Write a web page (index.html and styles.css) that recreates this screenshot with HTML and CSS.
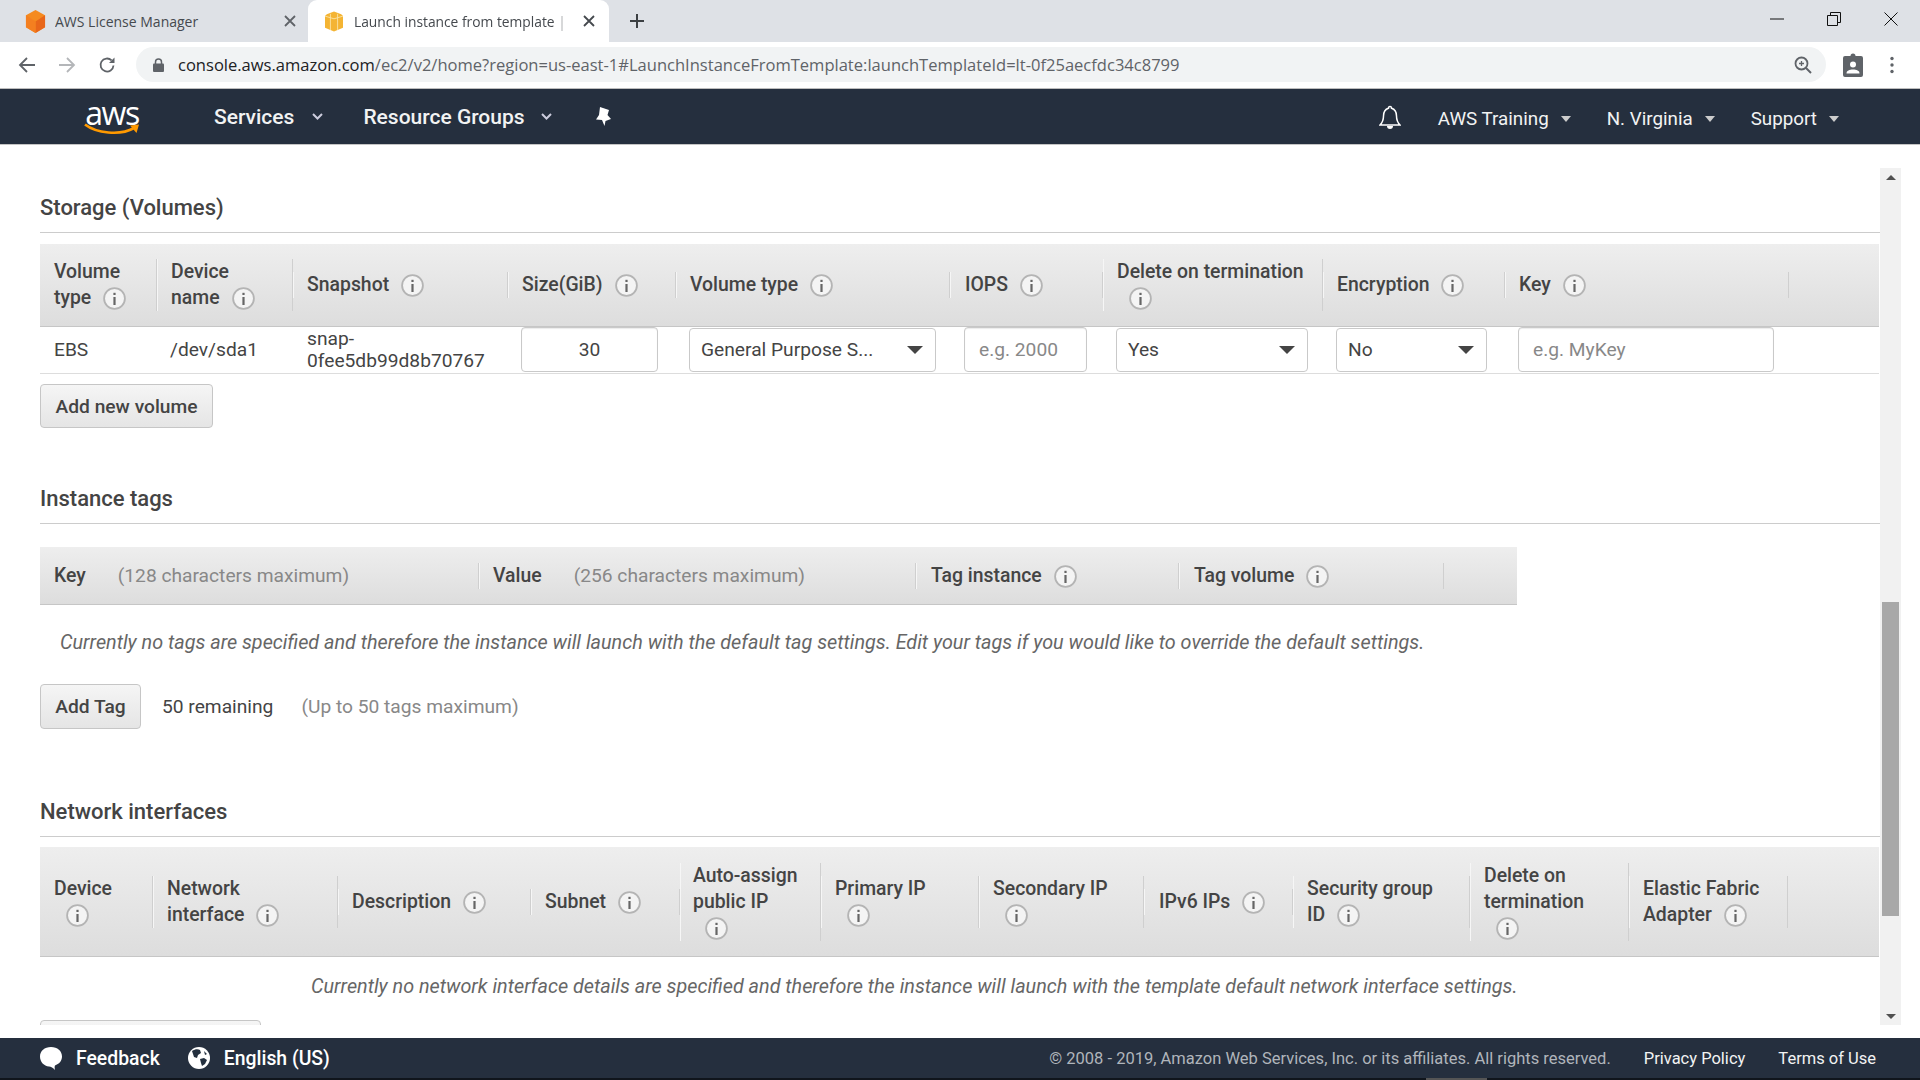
FILE: index.html
```html
<!DOCTYPE html>
<html lang="en">
<head>
<meta charset="utf-8">
<title>Launch instance from template</title>
<link rel="stylesheet" href="styles.css">
</head>
<body>
<svg class="defs" width="0" height="0" aria-hidden="true">
  <symbol id="info" viewBox="0 0 23 23">
    <circle cx="11.5" cy="11.5" r="10.4" fill="#f4f4f4" stroke="#b4b4b4" stroke-width="1.8"/>
    <rect x="10.4" y="10" width="2.2" height="8" fill="#666"/>
    <rect x="10.4" y="5.800" width="2.2" height="2.200" fill="#666"/>
  </symbol>
</svg>

<div class="tabstrip">
  <div class="tab">
    <svg class="favicon" viewBox="0 0 22 24"><path d="M11 0 21 5.500V18L11 24 1 18V5.500Z" fill="#f58a1f"/><path d="M11 12 21 5.500V18L11 24Z" fill="#e8661a"/><path d="M11 12 1 5.500V18L11 24Z" fill="#f47f20"/></svg>
    <span class="tab-title">AWS License Manager</span>
    <svg class="tab-close" viewBox="0 0 12 12"><path d="M1 1 11 11M11 1 1 11" stroke="#5f6368" stroke-width="1.800"/></svg>
  </div>
  <div class="tab tab-active">
    <svg class="favicon favicon-box" viewBox="0 0 20 22"><path d="M2 3 10 0 18 3 20 5V18L10 22 0 18V5Z" fill="#f4b433"/><path d="M6 2.500V20.500M14 2.500V20.500M0 5 10 8 20 5" stroke="#fbe3a5" stroke-width="1" fill="none"/></svg>
    <span class="tab-title tab-fade">Launch instance from template | E</span>
    <svg class="tab-close tab-close-active" viewBox="0 0 12 12"><path d="M1 1 11 11M11 1 1 11" stroke="#45494e" stroke-width="1.800"/></svg>
  </div>
  <svg class="newtab" viewBox="0 0 16 16"><path d="M8 1V15M1 8H15" stroke="#3c4043" stroke-width="2"/></svg>
  <div class="winctl">
    <svg viewBox="0 0 14 14"><path d="M0 7H14" stroke="#111" stroke-width="1"/></svg>
    <svg viewBox="0 0 14 14"><path d="M.5 3.500H10.500V13.500H.5ZM3.500 3.500V.5H13.500V10.500H10.500" stroke="#111" fill="none"/></svg>
    <svg viewBox="0 0 14 14"><path d="M.5.5 13.500 13.500M13.500.5.5 13.500" stroke="#111" fill="none"/></svg>
  </div>
</div>

<div class="toolbar">
  <svg class="tb-icon" viewBox="0 0 18 18"><path d="M17 9H2M9 2 2 9l7 7" fill="none" stroke="#5f6368" stroke-width="1.800"/></svg>
  <svg class="tb-icon" viewBox="0 0 18 18"><path d="M1 9H16M9 2l7 7-7 7" fill="none" stroke="#b4b6b9" stroke-width="1.800"/></svg>
  <svg class="tb-icon" viewBox="0 0 18 18"><path d="M15.500 9.500A6.500 6.500 0 1 1 13.600 4.400" fill="none" stroke="#5f6368" stroke-width="1.800"/><path d="M16.500 1.500V7H11Z" fill="#5f6368"/></svg>
  <div class="omnibox">
    <svg class="lock" viewBox="0 0 11 14"><path d="M2.500 6V4a3 3 0 0 1 6 0v2" fill="none" stroke="#5f6368" stroke-width="1.500"/><rect y="5.500" width="11" height="8.500" rx="1" fill="#5f6368"/></svg>
    <span class="url"><span class="url-host">console.aws.amazon.com</span>/ec2/v2/home?region=us-east-1#LaunchInstanceFromTemplate:launchTemplateId=lt-0f25aecfdc34c8799</span>
    <svg class="zoom-ico" viewBox="0 0 18 18"><circle cx="7.500" cy="7.500" r="6" fill="none" stroke="#5f6368" stroke-width="1.800"/><path d="M12 12 17 17" stroke="#5f6368" stroke-width="2"/><path d="M7.500 5V10M5 7.500H10" stroke="#5f6368" stroke-width="1.300"/></svg>
  </div>
  <svg class="badge" viewBox="0 0 20 24"><path d="M7.500 3a2.500 2.500 0 0 1 5 0h5.500a2 2 0 0 1 2 2v17a2 2 0 0 1-2 2H2a2 2 0 0 1-2-2V5a2 2 0 0 1 2-2Z" fill="#5f6368"/><circle cx="10" cy="11.500" r="3" fill="#fff"/><path d="M3.500 20.500c0-3 3-4 6.500-4s6.500 1 6.500 4Z" fill="#fff"/></svg>
  <svg class="kebab" viewBox="0 0 4 18"><circle cx="2" cy="2.500" r="1.700" fill="#5f6368"/><circle cx="2" cy="9" r="1.700" fill="#5f6368"/><circle cx="2" cy="15.500" r="1.700" fill="#5f6368"/></svg>
</div>

<nav class="navbar">
  <div class="logo">
    <span class="logo-text">aws</span>
    <svg class="logo-smile" viewBox="0 0 56 12"><path d="M1 1.500C12 10 36 13 50 5" fill="none" stroke="#f90" stroke-width="2.600"/><path d="M46 2.500 55 1.500 52.500 10Z" fill="#f90"/></svg>
  </div>
  <a class="nav-item nav-services">Services</a>
  <svg class="chev" viewBox="0 0 11 7"><path d="M1 1 5.500 5.500 10 1" fill="none" stroke="#ccd" stroke-width="2"/></svg>
  <a class="nav-item nav-groups">Resource Groups</a>
  <svg class="chev chev-groups" viewBox="0 0 11 7"><path d="M1 1 5.500 5.500 10 1" fill="none" stroke="#ccd" stroke-width="2"/></svg>
  <svg class="pin" viewBox="0 0 18 20"><path d="M5 0 14 3 12.500 8 16 12 10.500 14 9.500 19 7 13 1 12.500 4 8Z" fill="#fff"/></svg>
  <div class="nav-right">
    <svg class="bell" viewBox="0 0 22 25"><path d="M11 1.500a1.500 1.500 0 0 1 1.500 1.800C16 4.300 17.500 7 17.500 11c0 4.500 1.500 7 3.500 9H1c2-2 3.500-4.500 3.500-9 0-4 1.500-6.700 5-7.700A1.500 1.500 0 0 1 11 1.500Z" fill="none" stroke="#fff" stroke-width="1.500"/><path d="M8 21h6a3 3 0 0 1-6 0Z" fill="#fff"/></svg>
    <span class="nav-menu">AWS Training<i class="caret"></i></span>
    <span class="nav-menu">N. Virginia<i class="caret"></i></span>
    <span class="nav-menu">Support<i class="caret"></i></span>
  </div>
</nav>

<div class="content">
  <main class="main">
    <section class="section section-storage">
      <h2 class="sec-title">Storage (Volumes)</h2>
      <div class="thead cols-storage">
        <div class="th"><span>Volume<br>type<svg class="i"><use href="#info"/></svg></span></div>
        <div class="th"><span>Device<br>name<svg class="i"><use href="#info"/></svg></span></div>
        <div class="th"><span>Snapshot<svg class="i"><use href="#info"/></svg></span></div>
        <div class="th"><span>Size(GiB)<svg class="i"><use href="#info"/></svg></span></div>
        <div class="th"><span>Volume type<svg class="i"><use href="#info"/></svg></span></div>
        <div class="th th-wide"><span>IOPS<svg class="i"><use href="#info"/></svg></span></div>
        <div class="th"><span>Delete on termination<br><svg class="i"><use href="#info"/></svg></span></div>
        <div class="th"><span>Encryption<svg class="i"><use href="#info"/></svg></span></div>
        <div class="th"><span>Key<svg class="i"><use href="#info"/></svg></span></div>
        <div class="th th-last"></div>
      </div>
      <div class="trow cols-storage">
        <div class="td">EBS</div>
        <div class="td td-device">/dev/sda1</div>
        <div class="td td-snap">snap-<br>0fee5db99d8b70767</div>
        <div class="td td-ctl"><input class="field field-size" value="30" aria-label="Size"></div>
        <div class="td td-ctl"><div class="select sel-type"><span>General Purpose S...</span><i class="sel-caret"></i></div></div>
        <div class="td td-ctl td-iops"><input class="field field-iops" placeholder="e.g. 2000" aria-label="IOPS"></div>
        <div class="td td-ctl"><div class="select sel-del"><span>Yes</span><i class="sel-caret"></i></div></div>
        <div class="td td-ctl"><div class="select sel-enc"><span>No</span><i class="sel-caret"></i></div></div>
        <div class="td td-ctl"><input class="field field-key" placeholder="e.g. MyKey" aria-label="Key"></div>
        <div class="td"></div>
      </div>
      <button class="btn btn-volume">Add new volume</button>
    </section>

    <section class="section section-tags">
      <h2 class="sec-title">Instance tags</h2>
      <div class="thead cols-tags">
        <div class="th"><span>Key<em class="hint hint-key">(128 characters maximum)</em></span></div>
        <div class="th"><span>Value<em class="hint hint-value">(256 characters maximum)</em></span></div>
        <div class="th th-wide"><span>Tag instance<svg class="i"><use href="#info"/></svg></span></div>
        <div class="th th-wide"><span>Tag volume<svg class="i"><use href="#info"/></svg></span></div>
        <div class="th th-last"></div>
      </div>
      <p class="msg msg-tags">Currently no tags are specified and therefore the instance will launch with the default tag settings. Edit your tags if you would like to override the default settings.</p>
      <div class="tag-actions">
        <button class="btn btn-tag">Add Tag</button>
        <span class="remaining">50 remaining</span>
        <span class="limit">(Up to 50 tags maximum)</span>
      </div>
    </section>

    <section class="section section-net">
      <h2 class="sec-title">Network interfaces</h2>
      <div class="thead cols-net">
        <div class="th"><span>Device<br><svg class="i"><use href="#info"/></svg></span></div>
        <div class="th"><span>Network<br>interface<svg class="i"><use href="#info"/></svg></span></div>
        <div class="th"><span>Description<svg class="i"><use href="#info"/></svg></span></div>
        <div class="th"><span>Subnet<svg class="i"><use href="#info"/></svg></span></div>
        <div class="th th-narrow"><span>Auto-assign<br>public IP<br><svg class="i"><use href="#info"/></svg></span></div>
        <div class="th"><span>Primary IP<br><svg class="i"><use href="#info"/></svg></span></div>
        <div class="th"><span>Secondary IP<br><svg class="i"><use href="#info"/></svg></span></div>
        <div class="th th-wide"><span>IPv6 IPs<svg class="i"><use href="#info"/></svg></span></div>
        <div class="th"><span>Security group<br>ID<svg class="i"><use href="#info"/></svg></span></div>
        <div class="th"><span>Delete on<br>termination<br><svg class="i"><use href="#info"/></svg></span></div>
        <div class="th"><span>Elastic Fabric<br>Adapter<svg class="i"><use href="#info"/></svg></span></div>
        <div class="th th-last"></div>
      </div>
      <p class="msg msg-net">Currently no network interface details are specified and therefore the instance will launch with the template default network interface settings.</p>
      <button class="btn btn-net" aria-label="Add Network Interface"></button>
    </section>
  </main>
  <div class="scrollbar">
    <div class="sb-btn"><i class="sb-up"></i></div>
    <div class="sb-track"><div class="sb-thumb"></div></div>
    <div class="sb-btn"><i class="sb-down"></i></div>
  </div>
</div>

<footer class="footer">
  <svg class="ft-icon" viewBox="0 0 24 24"><path d="M12 1C5.500 1 1 5 1 10.500S5 20 10 20.500c2 .1 4 1.500 6 3.500-.5-2-.5-3.500 0-4.500 4-1.500 7-4.500 7-9C23 5 18.500 1 12 1Z" fill="#fff"/></svg>
  <span class="ft-link ft-feedback">Feedback</span>
  <svg class="ft-icon ft-globe" viewBox="0 0 24 24"><circle cx="12" cy="12" r="11" fill="#fff"/><path d="M5 5c3-2 6-2 8-1l1 3-3 2-1 3-3-1-1-3ZM13 13l4-1 3 2-2 4-3 2-1-3ZM17 5l3 3-2 1Z" fill="#232f3e"/></svg>
  <span class="ft-link">English (US)</span>
  <span class="copyright">© 2008 - 2019, Amazon Web Services, Inc. or its affiliates. All rights reserved.</span>
  <span class="ft-plain ft-privacy">Privacy Policy</span>
  <span class="ft-plain ft-terms">Terms of Use</span>
  <div class="ft-strip"><i class="ft-lump"></i></div>
</footer>
</body>
</html>
```

FILE: styles.css
```css
* { box-sizing: border-box; }
html, body { margin: 0; height: 100%; overflow: hidden; }
body {
  display: flex;
  flex-direction: column;
  height: 1080px;
  font-family: Roboto, "Liberation Sans", sans-serif;
  font-size: 19.2px;
  color: #444;
  background: #fff;
}
.defs { position: absolute; }

/* browser chrome */
.tabstrip {
  height: 42px;
  flex: none;
  display: flex;
  align-items: flex-end;
  padding-left: 8px;
  background: #dee1e6;
}
.tab {
  width: 300px;
  height: 34px;
  padding: 0 12px 0 17px;
  display: flex;
  align-items: center;
  color: #45494e;
  margin-bottom: 4px;
}
.tab-active {
  height: 42px;
  margin-bottom: 0;
  width: 301px;
  padding-right: 14px;
  background: #fff;
  border-radius: 9px 9px 0 0;
}
.favicon { width: 21px; height: 23px; flex: none; }
.favicon-box { width: 18px; height: 21px; }
.tab-title {
  flex: 1;
  margin-left: 9px;
  font-family: "Open Sans", "Liberation Sans", sans-serif;
  font-size: 14px;
  white-space: nowrap;
  overflow: hidden;
}
.tab-fade {
  margin-left: 11px;
  font-size: 13.8px;
  -webkit-mask-image: linear-gradient(to right, #000 87%, transparent 94%);
  mask-image: linear-gradient(to right, #000 87%, transparent 94%);
}
.tab-close { width: 12px; height: 12px; flex: none; margin-left: 10px; }
.tab-close-active { margin-left: 0; }
.newtab { width: 16px; height: 16px; margin: 0 0 13px 20px; flex: none; }
.winctl {
  margin-left: auto;
  align-self: flex-start;
  display: flex;
  gap: 43px;
  padding: 12px 22px 0 0;
}
.winctl svg { width: 14px; height: 14px; }

.toolbar {
  height: 47px;
  flex: none;
  display: flex;
  align-items: center;
  padding: 0 0 1px 18px;
  background: #fff;
  border-bottom: 1px solid #bdbdbd;
}
.tb-icon { width: 18px; height: 18px; margin-right: 22px; flex: none; }
.omnibox {
  margin-left: -2px;
  width: 1690px;
  height: 35px;
  display: flex;
  align-items: center;
  padding: 0 14px 0 17px;
  border-radius: 18px;
  background: #f1f3f4;
}
.lock { width: 11px; height: 14px; flex: none; }
.url {
  margin-left: 14px;
  font-family: "Open Sans", "Liberation Sans", sans-serif;
  font-size: 16.54px;
  color: #5f6368;
  white-space: nowrap;
}
.url-host { color: #202124; }
.zoom-ico { width: 18px; height: 18px; margin-left: auto; }
.badge { width: 20px; height: 24px; margin-left: 17px; flex: none; }
.kebab { width: 4px; height: 18px; margin-left: 27px; flex: none; }

/* console nav */
.navbar {
  height: 56px;
  flex: none;
  display: flex;
  align-items: center;
  padding-left: 84px;
  background: #252f3e;
  border-bottom: 1px solid #c4c4c4;
  color: #fff;
}
.logo {
  width: 56px;
  display: flex;
  flex-direction: column;
  align-items: center;
}
.logo-text {
  font-family: "Open Sans", sans-serif;
  font-size: 32px;
  line-height: 27px;
  letter-spacing: -1.4px;
}
.logo-smile { width: 56px; height: 12px; margin-top: -3px; }
.nav-item {
  font-weight: 500;
  font-size: 21px;
  color: #f2f3f3;
  margin-top: 1px;
}
.nav-services { margin-left: 74px; }
.nav-groups { margin-left: 40px; }
.chev { width: 11px; height: 7px; margin-left: 18px; flex: none; }
.chev-groups { margin-left: 16px; }
.pin { width: 18px; height: 20px; margin-left: 43px; flex: none; }
.nav-right {
  margin-left: auto;
  display: flex;
  align-items: center;
  padding-right: 81px;
}
.bell { width: 22px; height: 25px; margin-right: 37px; margin-top: 1px; }
.nav-menu { display: flex; align-items: center; margin: 4px 36px 0 0; font-size: 18.8px; color: #f2f3f3; }
.nav-menu:last-child { margin-right: 0; }
.caret {
  width: 0;
  height: 0;
  margin-left: 12px;
  border: 5px solid transparent;
  border-top: 6px solid #ccc;
  border-bottom: 0;
}

/* page */
.content {
  flex: 1;
  min-height: 0;
  display: flex;
  padding-bottom: 13px;
  background: #fff;
}
.main {
  width: 1880px;
  flex: none;
  overflow: hidden;
  padding: 47px 1px 0 40px;
}
.section-tags { margin-top: 55px; }
.section-net { margin-top: 67px; }
.sec-title {
  margin: 0 -1px 0 0;
  padding-bottom: 8px;
  font-size: 22px;
  font-weight: 500;
  line-height: 32px;
  color: #444;
  border-bottom: 1px solid #ccc;
}

.thead {
  display: grid;
  align-items: center;
  background: linear-gradient(#eee, #ddd);
  border-bottom: 1px solid #c6c6c6;
  font-weight: 500;
  font-size: 19.4px;
  line-height: 26px;
}
.cols-storage { grid-template-columns: 117px 136px 215px 168px 274px 153px 220px 182px 284px 90px; }
.section-storage .thead { margin-top: 11px; height: 83px; }
.cols-tags { grid-template-columns: 439px 437px 263px 265px 73px; width: 1477px; margin-top: 23px; height: 58px; }
.cols-net { grid-template-columns: 113px 185px 193px 149px 141px 158px 165px 149px 177px 159px 159px 91px; margin-top: 10px; height: 110px; }
.th {
  padding: 0 14px 0 13px;
  border-left: 1px solid #f6f6f6;
  border-right: 1px solid #cfcfcf;
  white-space: nowrap;
}
.th:first-child { border-left: 0; padding-left: 14px; }
.th-wide { padding-left: 14px; }
.th-narrow { padding-left: 12px; }
.th-last { border: 0; }
.th span { display: block; }
.i {
  width: 23px;
  height: 23px;
  margin-left: 12px;
  vertical-align: -6px;
}
.hint { font-style: normal; font-weight: 400; font-size: 19.2px; color: #888; }
.hint-key { margin-left: 32px; }
.hint-value { margin-left: 32px; }

.trow {
  display: grid;
  align-items: center;
  height: 47px;
  border-bottom: 1px solid #ddd;
  line-height: 22px;
}
.td { padding-left: 14px; white-space: nowrap; }
.td-device { padding-left: 13px; }
.td-ctl { padding-left: 13px; padding-top: 1px; align-self: start; }
.td-iops { padding-left: 14px; }
.field, .select {
  display: flex;
  height: 44px;
  border: 1px solid #c9c9c9;
  border-radius: 4px;
  background: #fff;
  font-family: inherit;
  font-size: 19.2px;
  color: #444;
}
.field { padding: 0 14px; box-shadow: inset 0 1px 1px rgba(0,0,0,.08); outline: 0; height: 45px; margin-top: -1px; }
.field::placeholder { color: #888; opacity: 1; }
.field-size { width: 137px; text-align: center; }
.field-iops { width: 123px; }
.field-key { width: 256px; }
.select { align-items: center; justify-content: space-between; padding: 0 12px 0 11px; }
.sel-type { width: 247px; }
.sel-del { width: 192px; }
.sel-enc { width: 151px; }
.sel-caret {
  width: 0;
  height: 0;
  border: 8px solid transparent;
  border-top: 8px solid #444;
  border-bottom: 0;
}
.btn {
  display: block;
  font-family: inherit;
  font-size: 19.2px;
  font-weight: 500;
  color: #444;
  border: 1px solid #c6c6c6;
  border-radius: 4px;
  background: linear-gradient(#f5f5f5, #e5e5e5);
  padding: 0;
}
.btn-volume { width: 173px; height: 44px; margin-top: 10px; }
.btn-tag { width: 101px; height: 45px; }
.btn-net { width: 221px; height: 45px; margin-top: 21px; }
.msg { margin: 0; font-style: italic; font-size: 19.8px; color: #666; line-height: 24px; white-space: nowrap; }
.msg-tags { padding: 26px 0 0 20px; }
.msg-net { padding: 18px 0 0 271px; }
.tag-actions { display: flex; align-items: center; margin-top: 29px; }
.remaining { margin-left: 21px; }
.limit { margin-left: 28px; color: #888; }

.scrollbar {
  width: 21px;
  margin-top: 23px;
  flex: none;
  display: flex;
  flex-direction: column;
  background: #f1f1f1;
}
.sb-btn { height: 18px; flex: none; display: flex; align-items: center; justify-content: center; }
.sb-up { border: 5px solid transparent; border-bottom: 5px solid #505050; border-top: 0; }
.sb-down { border: 5px solid transparent; border-top: 5px solid #505050; border-bottom: 0; }
.sb-track { flex: 1; padding: 416px 2px 0; }
.sb-thumb { height: 314px; background: #a8a8a8; }

/* footer */
.footer {
  position: relative;
  height: 42px;
  flex: none;
  display: flex;
  align-items: center;
  padding: 0 44px 2px 39px;
  background: #252f3e;
  color: #fff;
}
.ft-icon { width: 24px; height: 24px; flex: none; }
.ft-globe { margin-left: 27px; }
.ft-link { margin-left: 13px; font-size: 19.4px; font-weight: 500; }
.copyright { margin-left: auto; color: #b0b5bb; font-size: 16.5px; }
.ft-plain { font-size: 16.5px; color: #f2f3f3; }
.ft-privacy { margin-left: 33px; }
.ft-terms { margin-left: 33px; }
.ft-strip { position: absolute; left: 0; right: 0; bottom: 0; height: 2px; background: #10151c; }
.ft-lump { position: absolute; left: 1426px; width: 61px; height: 2px; background: #555; }
```
